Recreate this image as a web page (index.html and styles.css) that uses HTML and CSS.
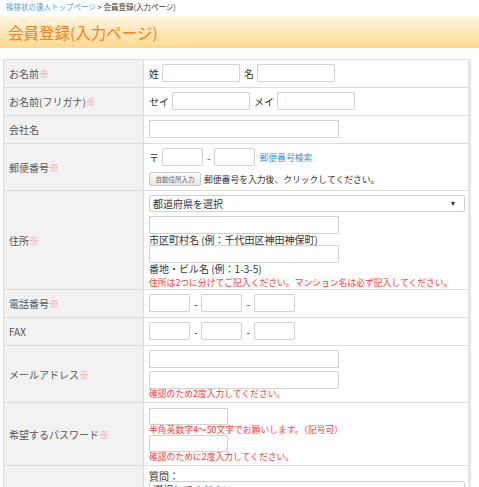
FILE: index.html
```html
<!DOCTYPE html>
<html lang="ja">
<head>
<meta charset="utf-8">
<title>会員登録(入力ページ)</title>
<link rel="stylesheet" href="styles.css">
</head>
<body>
<div class="crumb"><a class="crumb-link" href="#">挨拶状の達人トップページ</a> &gt; 会員登録(入力ページ)</div>
<h1 class="title">会員登録(入力ページ)</h1>
<table class="form">
  <tr>
    <th>お名前<span class="req">※</span></th>
    <td class="v"><div class="line"><span class="pre">姓</span><input class="in w78 mr4"><span class="pre">名</span><input class="in w78"></div></td>
  </tr>
  <tr>
    <th>お名前(フリガナ)<span class="req">※</span></th>
    <td class="v"><div class="line"><span class="pre">セイ</span><input class="in w78 mr4"><span class="pre">メイ</span><input class="in w78"></div></td>
  </tr>
  <tr>
    <th>会社名</th>
    <td class="v"><input class="in w190"></td>
  </tr>
  <tr>
    <th>郵便番号<span class="req">※</span></th>
    <td class="v v-zip">
      <div class="line"><span class="pre">〒</span><input class="in w41"><span class="dash">-</span><input class="in w41"><a class="link" href="#">郵便番号検索</a></div>
      <div class="line line-btn"><button class="btn" type="button">自動住所入力</button><span class="help">郵便番号を入力後、クリックしてください。</span></div>
    </td>
  </tr>
  <tr>
    <th>住所<span class="req">※</span></th>
    <td class="v v-addr">
      <span class="sel-wrap"><select class="sel"><option>都道府県を選択</option></select><span class="arrow"></span></span>
      <input class="in w190 mt4">
      <div class="txt t11">市区町村名 (例：千代田区神田神保町)</div>
      <input class="in w190">
      <div class="txt t11">番地・ビル名 (例：1-3-5)</div>
      <div class="note mt4">住所は2つに分けてご記入ください。マンション名は必ず記入してください。</div>
    </td>
  </tr>
  <tr>
    <th>電話番号<span class="req">※</span></th>
    <td class="v"><div class="line"><input class="in w41"><span class="dash">-</span><input class="in w41"><span class="dash">-</span><input class="in w41"></div></td>
  </tr>
  <tr>
    <th>FAX</th>
    <td class="v"><div class="line"><input class="in w41"><span class="dash">-</span><input class="in w41"><span class="dash">-</span><input class="in w41"></div></td>
  </tr>
  <tr>
    <th>メールアドレス<span class="req">※</span></th>
    <td class="v v-mail">
      <input class="in w190">
      <input class="in w190 mt3">
      <div class="note">確認のため2度入力してください。</div>
    </td>
  </tr>
  <tr>
    <th>希望するパスワード<span class="req">※</span></th>
    <td class="v v-pw">
      <input class="in w79 h17" type="password">
      <div class="note">半角英数字4～50文字でお願いします。（記号可）</div>
      <input class="in w79 h17" type="password">
      <div class="note">確認のために2度入力してください。</div>
    </td>
  </tr>
  <tr>
    <th>秘密の質問<span class="req">※</span></th>
    <td class="v v-q">
      <div class="txt t11">質問：</div>
      <span class="sel-wrap"><select class="sel"><option>選択してください</option></select><span class="arrow"></span></span>
      <div class="txt t11 mt3">答え：</div>
      <input class="in w190">
    </td>
  </tr>
</table>
</body>
</html>
```

FILE: styles.css
```css
html, body {
  margin: 0;
  padding: 0;
  background: #fff;
}
body {
  font-family: "Noto Sans CJK JP", "Noto Sans", sans-serif;
  color: #333;
  font-size: 10px;
}
.crumb {
  font-size: 7.5px;
  line-height: 14px;
  padding-left: 6px;
  color: #333;
  white-space: nowrap;
}
.crumb-link {
  color: #4f9bd8;
  text-decoration: none;
}
.title {
  margin: 2px 0 0;
  height: 32px;
  line-height: 32px;
  padding-left: 8px;
  font-size: 15.5px;
  font-weight: normal;
  color: #f57f22;
  background: linear-gradient(#fff6e4, #fdd98c);
}
.form {
  margin: 11px 0 0 3px;
  width: 468px;
  box-sizing: border-box;
  table-layout: fixed;
  border-collapse: separate;
  border-spacing: 0;
  border-top: 1px solid #dcdcdc;
  border-left: 1px solid #dcdcdc;
  border-right: 3px solid #e6e6e6;
}
.form th {
  width: 140px;
  box-sizing: border-box;
  padding: 0 0 0 5px;
  text-align: left;
  font-weight: normal;
  color: #555;
  background: #f2f2f2;
  border-right: 1px solid #dcdcdc;
  border-bottom: 1px solid #dcdcdc;
  vertical-align: middle;
  white-space: nowrap;
}
.form td {
  vertical-align: top;
  border-bottom: 1px solid #dcdcdc;
}
.v {
  padding: 4px 3px 5px 5px;
}
.v-zip { padding-bottom: 4px; }
.v-addr { padding-bottom: 1px; }
.v-mail { padding-bottom: 3px; }
.v-pw { padding-top: 5px; padding-bottom: 3px; }
.v-q { padding-bottom: 6px; }
.req {
  color: #f58a9a;
}
.line {
  display: flex;
  align-items: center;
  height: 18px;
}
.line-btn {
  height: 14px;
  margin-top: 6px;
}
.pre {
  margin-right: 3px;
  white-space: nowrap;
}
.dash {
  margin: 0 4px;
}
.in {
  display: block;
  box-sizing: border-box;
  height: 18px;
  margin: 0;
  padding: 0 3px;
  border: 1px solid #d2d2d2;
  border-radius: 1px;
  background: #fff;
  font-family: inherit;
  font-size: 10px;
  flex: none;
}
.w78 { width: 78px; }
.w79 { width: 79px; }
.w41 { width: 41px; }
.w190 { width: 190px; }
.h17 { height: 17px; }
.mr4 { margin-right: 4px; }
.mt3 { margin-top: 3px; }
.mt4 { margin-top: 4px; }
.link {
  margin-left: 4px;
  font-size: 8.8px;
  color: #3d91d6;
  text-decoration: none;
  white-space: nowrap;
}
.btn {
  box-sizing: border-box;
  width: 52px;
  height: 14px;
  margin: 0 3px 0 0;
  padding: 0;
  border: 1px solid #c9c9c9;
  border-radius: 2px;
  background: linear-gradient(#fdfdfd, #e6e6e6);
  color: #666;
  font-family: inherit;
  font-size: 6.5px;
  line-height: 12px;
  flex: none;
}
.help {
  font-size: 8.8px;
  white-space: nowrap;
}
.sel-wrap {
  position: relative;
  display: block;
  width: 316px;
  height: 17px;
}
.sel {
  display: block;
  box-sizing: border-box;
  width: 316px;
  height: 17px;
  margin: 0;
  padding: 0 0 0 3px;
  border: 1px solid #cfcfcf;
  border-radius: 2px;
  background: #fff;
  color: #333;
  font-family: inherit;
  font-size: 10px;
  -webkit-appearance: none;
  appearance: none;
}
.arrow {
  position: absolute;
  right: 10px;
  top: 7px;
  width: 0;
  height: 0;
  border-left: 2.5px solid transparent;
  border-right: 2.5px solid transparent;
  border-top: 4px solid #333;
}
.txt {
  line-height: 10px;
  white-space: nowrap;
}
.t11 { line-height: 11px; }
.note {
  font-size: 8.8px;
  line-height: 10px;
  color: #ff3a3a;
  white-space: nowrap;
}
```
